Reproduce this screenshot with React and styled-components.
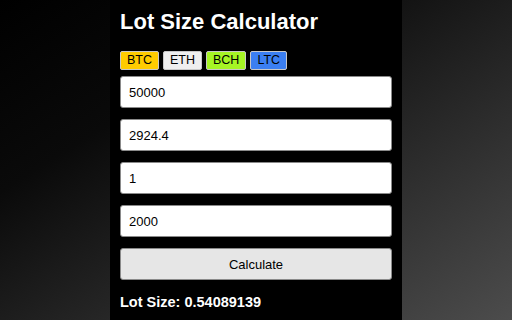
import React, { useState } from 'react';
import styled, { createGlobalStyle } from 'styled-components';

const GlobalStyle = createGlobalStyle`
  html, body {
    margin: 0;
    padding: 0;
    height: 100%;
  }
  body {
    background: linear-gradient(to bottom right, #000 0%, #0a0a0a 30%, #4c4c4c 100%);
    font-family: "Liberation Sans", Arial, sans-serif;
    overflow: hidden;
  }
`;

const Panel = styled.div`
  width: 292px;
  height: 100vh;
  margin: 0 auto;
  background: #000;
  padding: 9px 10px 0;
  box-sizing: border-box;
  display: flex;
  flex-direction: column;
`;

const Title = styled.h1`
  margin: 0;
  color: #fff;
  font-size: 22px;
  line-height: 26px;
  font-weight: bold;
`;

const CoinRow = styled.div`
  display: flex;
  gap: 4px;
  margin-top: 16px;
`;

const CoinButton = styled.button`
  font-family: "Liberation Sans", Arial, sans-serif;
  font-size: 12.5px;
  line-height: 15px;
  height: 19px;
  padding: 1px 6px;
  border: 1px solid #c8c8c8;
  border-radius: 2px;
  color: #000;
  background: ${p => p.$bg};
  cursor: pointer;
`;

const Form = styled.div`
  display: flex;
  flex-direction: column;
  gap: 11px;
  margin-top: 6px;
`;

const Field = styled.input`
  height: 32px;
  box-sizing: border-box;
  border: 1px solid #8a8a8a;
  border-radius: 3px;
  padding: 0 8px;
  font-family: "Liberation Sans", Arial, sans-serif;
  font-size: 13px;
  color: #000;
  background: #fff;
  outline: none;
`;

const CalcButton = styled.button`
  height: 32px;
  border: 1px solid #8a8a8a;
  border-radius: 3px;
  background: #e6e6e6;
  font-family: "Liberation Sans", Arial, sans-serif;
  font-size: 13px;
  color: #000;
  cursor: pointer;
`;

const Result = styled.div`
  margin-top: 14px;
  color: #fff;
  font-size: 14.5px;
  line-height: 17px;
  font-weight: bold;
`;

const coins = [
  { name: 'BTC', bg: '#ffcc00' },
  { name: 'ETH', bg: '#efefef' },
  { name: 'BCH', bg: '#a6f525' },
  { name: 'LTC', bg: '#3b7ff2' },
];

export default function App() {
  const [values, setValues] = useState(['50000', '2924.4', '1', '2000']);
  const [lot, setLot] = useState('0.54089139');

  const update = (i, v) => {
    const next = values.slice();
    next[i] = v;
    setValues(next);
  };

  const calculate = () => {
    const [balance, price, risk, stop] = values.map(Number);
    if (!price || !stop) return;
    setLot(((balance * risk / 100) / stop * price / 100).toFixed(8));
  };

  return (
    <>
      <GlobalStyle />
      <Panel>
        <Title>Lot Size Calculator</Title>
        <CoinRow>
          {coins.map(c => (
            <CoinButton key={c.name} $bg={c.bg}>{c.name}</CoinButton>
          ))}
        </CoinRow>
        <Form>
          {values.map((v, i) => (
            <Field key={i} value={v} onChange={e => update(i, e.target.value)} />
          ))}
          <CalcButton onClick={calculate}>Calculate</CalcButton>
        </Form>
        <Result>Lot Size: {lot}</Result>
      </Panel>
    </>
  );
}
